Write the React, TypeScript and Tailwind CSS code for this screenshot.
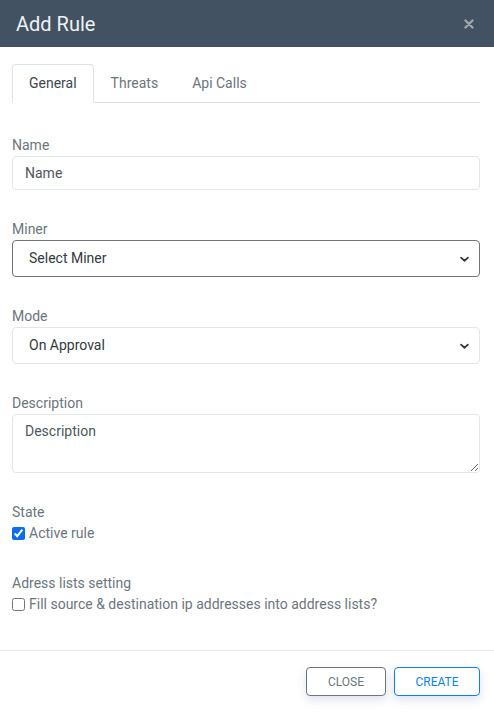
import { useState } from "react";

const TABS = ["General", "Threats", "Api Calls"];

function Chevron() {
	return (
		<svg
			viewBox="0 0 16 16"
			className="pointer-events-none absolute right-[10px] top-1/2 h-[11px] w-[11px] -translate-y-1/2"
			fill="none"
			stroke="#343a40"
			strokeWidth={2.6}
			strokeLinecap="round"
			strokeLinejoin="round"
		>
			<path d="M3 6l5 4.5L13 6" />
		</svg>
	);
}

function Field({ label, children }: { label: string; children: React.ReactNode }) {
	return (
		<div className="flex flex-col">
			<label className="text-[14px] leading-[21px] text-[#6c757d]">{label}</label>
			{children}
		</div>
	);
}

export default function App() {
	const [tab, setTab] = useState("General");
	const [active, setActive] = useState(true);
	const [fill, setFill] = useState(false);

	return (
		<div
			className="min-h-[712px] w-[494px] bg-white"
			style={{ fontFamily: "Roboto, 'Liberation Sans', sans-serif" }}
		>
			{/* Header */}
			<div className="flex h-[47px] items-center justify-between bg-[#435262] pl-4 pr-[20px]">
				<h1 className="text-[20px] font-normal text-[#eef1f4]">Add Rule</h1>
				<button type="button" aria-label="Close">
					<svg
						viewBox="0 0 10 10"
						className="h-[10px] w-[10px]"
						stroke="#9ea6ae"
						strokeWidth={2.4}
						strokeLinecap="round"
					>
						<path d="M1.5 1.5l7 7M8.5 1.5l-7 7" />
					</svg>
				</button>
			</div>

			{/* Body */}
			<div className="pl-3 pr-[14px] pt-[17px]">
				<div className="flex border-b border-[#dee2e6]">
					{TABS.map((t) => (
						<button
							key={t}
							type="button"
							onClick={() => setTab(t)}
							className={[
								"-mb-px h-[39px] rounded-t-[4px] border px-4 text-[14px]",
								tab === t
									? "border-[#dee2e6] border-b-white bg-white text-[#3f454b]"
									: "border-transparent text-[#6c757d]",
							].join(" ")}
						>
							{t}
						</button>
					))}
				</div>

				<div className="mt-[32px] flex flex-col gap-[29px]">
					<Field label="Name">
						<input
							placeholder="Name"
							className="h-[34px] rounded-[4px] border border-[#e3e6ea] px-3 text-[14px] text-[#495057] placeholder:text-[#4f565d] outline-none"
						/>
					</Field>

					<Field label="Miner">
						<div className="relative">
							<select className="h-[37px] w-full appearance-none rounded-[4px] border border-[#6f747a] bg-white px-4 text-[14px] text-[#343a40] outline-none">
								<option>Select Miner</option>
							</select>
							<Chevron />
						</div>
					</Field>

					<Field label="Mode">
						<div className="relative">
							<select className="h-[37px] w-full appearance-none rounded-[4px] border border-[#e3e6ea] bg-white px-4 text-[14px] text-[#343a40] outline-none">
								<option>On Approval</option>
							</select>
							<Chevron />
						</div>
					</Field>

					<Field label="Description">
						<textarea
							placeholder="Description"
							className="h-[59px] rounded-[4px] border border-[#e3e6ea] px-3 py-[6px] text-[14px] leading-[21px] text-[#495057] placeholder:text-[#4f565d] outline-none"
						/>
					</Field>

					<Field label="State">
						<label className="flex h-[21px] items-center gap-[4px] text-[14px] text-[#6c757d]">
							<input
								type="checkbox"
								checked={active}
								onChange={() => setActive((v) => !v)}
								className="m-0 h-[13px] w-[13px] accent-[#0b6cf0]"
							/>
							Active rule
						</label>
					</Field>

					<Field label="Adress lists setting">
						<label className="flex h-[21px] items-center gap-[4px] text-[14px] text-[#6c757d]">
							<input
								type="checkbox"
								checked={fill}
								onChange={() => setFill((v) => !v)}
								className="m-0 h-[13px] w-[13px]"
							/>
							Fill source &amp; destination ip addresses into address lists?
						</label>
					</Field>
				</div>
			</div>

			{/* Footer */}
			<div className="mt-[35px] flex justify-end gap-2 border-t border-[#e9ecef] px-[14px] pt-[16px]">
				<button
					type="button"
					className="h-[29px] w-[80px] rounded-[4px] border border-[#6c757d] bg-white text-[12px] uppercase text-[#6c757d] shadow-[0_4px_10px_rgba(80,100,160,0.18)]"
				>
					Close
				</button>
				<button
					type="button"
					className="h-[29px] w-[86px] rounded-[4px] border border-[#0d7ff4] bg-white text-[12px] uppercase text-[#0d7ff4] shadow-[0_4px_10px_rgba(80,100,160,0.18)]"
				>
					Create
				</button>
			</div>
		</div>
	);
}
